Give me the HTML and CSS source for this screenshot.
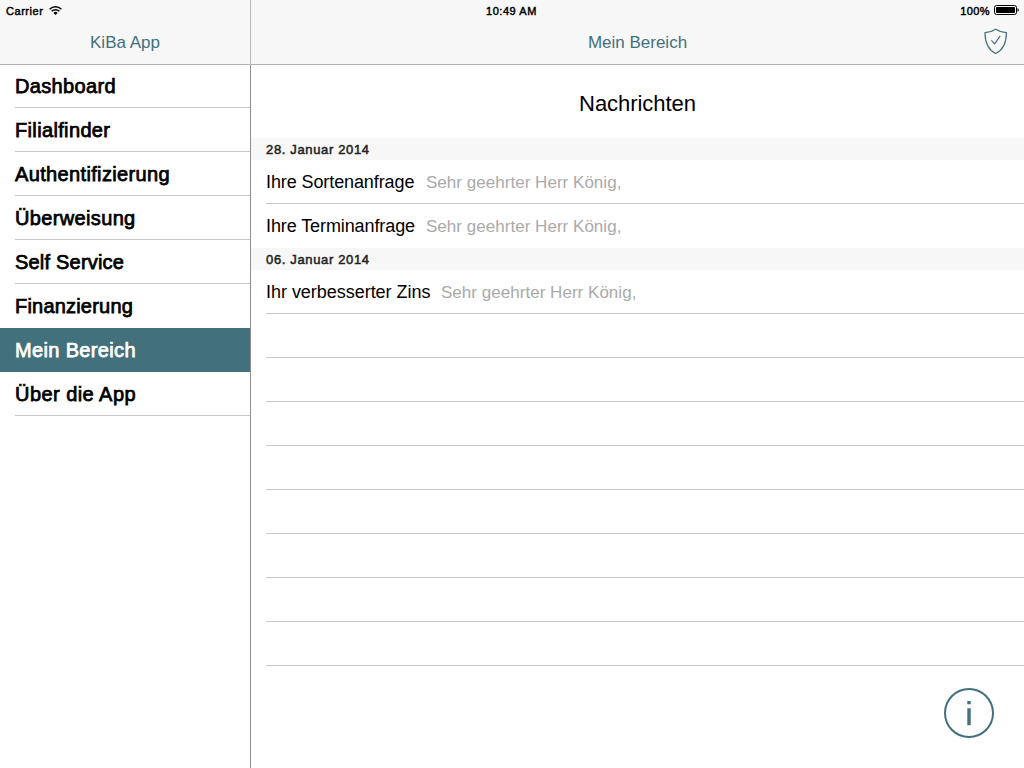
FILE: index.html
```html
<!DOCTYPE html>
<html lang="de">
<head>
<meta charset="utf-8">
<title>KiBa App</title>
<link rel="stylesheet" href="styles.css">
</head>
<body>
<div class="app">
  <aside class="sidebar">
    <header class="bar">
      <div class="status"><span>Carrier</span>
        <svg class="wifi" width="13" height="9" viewBox="0 0 13 9"><g fill="none" stroke="#000" stroke-width="1.5"><path d="M.6 3.200a8.600 8.600 0 0 1 11.800 0"/><path d="M2.600 5.300a5.600 5.600 0 0 1 7.800 0"/></g><path d="M6.500 9 4.400 6.900a3 3 0 0 1 4.200 0z"/></svg>
      </div>
      <div class="bar-title app-name">KiBa App</div>
    </header>
    <nav class="menu">
      <a class="item">Dashboard</a>
      <a class="item">Filialfinder</a>
      <a class="item">Authentifizierung</a>
      <a class="item">Überweisung</a>
      <a class="item snug">Self Service</a>
      <a class="item snug last">Finanzierung</a>
      <a class="item selected">Mein Bereich</a>
      <a class="item wide">Über die App</a>
    </nav>
  </aside>
  <main class="content">
    <header class="bar">
      <div class="status status-main"><span class="clock">10:49 AM</span><span class="charge">100%</span>
        <svg class="battery" width="25" height="10" viewBox="0 0 25 10"><rect x=".5" y=".5" width="22" height="9" rx="2" fill="none" stroke="#000"/><rect x="2" y="2" width="19" height="6" rx=".8"/><path d="M23.5 3.3q1.3.3 1.3 1.7t-1.3 1.7z"/></svg>
      </div>
      <div class="bar-title">Mein Bereich</div>
      <svg class="shield" width="24" height="27" viewBox="0 0 24 27" fill="none" stroke="#42707c" stroke-width="1.2"><path d="M11.700 1.300C8.500 3.500 5 4.500 1 4.700 1 12.500 2.300 20.800 11.700 25.500 21.100 20.800 22.400 12.500 22.400 4.700 18.400 4.500 14.900 3.500 11.700 1.300z"/><path d="m7.400 12.300 3.300 3.500 5.500-7.900"/></svg>
    </header>
    <h1 class="title">Nachrichten</h1>
    <h2 class="date">28. Januar 2014</h2>
    <div class="row"><span class="subject">Ihre Sortenanfrage</span><span class="preview">Sehr geehrter Herr König,</span></div>
    <div class="row last"><span class="subject">Ihre Terminanfrage</span><span class="preview">Sehr geehrter Herr König,</span></div>
    <h2 class="date">06. Januar 2014</h2>
    <div class="row"><span class="subject zins">Ihr verbesserter Zins</span><span class="preview">Sehr geehrter Herr König,</span></div>
    <div class="row"></div><div class="row"></div><div class="row"></div><div class="row"></div>
    <div class="row"></div><div class="row"></div><div class="row"></div><div class="row"></div>
    <svg class="info" width="50" height="50" viewBox="0 0 50 50"><circle cx="25" cy="25" r="24" fill="none" stroke="#42707c" stroke-width="2"/><path fill="#42707c" d="M23.300 13h3.400v3.300h-3.400zM23.300 20.300h3.400v17h-3.400z"/></svg>
  </main>
</div>
</body>
</html>
```
FILE: styles.css
```css
* { box-sizing: border-box; }
body { margin: 0; background: #fff; color: #000; font-family: "Liberation Sans", Arial, sans-serif; }
.app { display: flex; width: 1024px; height: 768px; overflow: hidden; }
.sidebar { width: 251px; flex: none; border-right: 1px solid #8e8e8f; }
.content { flex: 1; position: relative; }
.bar { position: relative; height: 65px; background: #f7f7f7; border-bottom: 1px solid #b2b2b2; }
.sidebar .bar { margin-right: -1px; border-right: 1px solid #b8b8b8; }
.status { display: flex; align-items: center; height: 22px; padding-left: 6px; font-size: 11px; letter-spacing: .55px; -webkit-text-stroke: .45px; }
.wifi { margin: -2px 0 0 6px; }
.status-main { padding: 0 5px 0 235px; }
.charge { margin-left: auto; letter-spacing: .4px; }
.battery { margin: -2px 0 0 4px; }
.bar-title { height: 42px; line-height: 41px; text-align: center; font-size: 17px; color: #42707c; }
.shield { position: absolute; right: 16px; top: 28px; }
.menu { display: flex; flex-direction: column; margin-top: -1px; }
.item { height: 44px; padding-left: 15px; line-height: 45px; font-size: 20px; letter-spacing: .35px; -webkit-text-stroke: .75px; background: linear-gradient(#c8c7cc, #c8c7cc) 15px 100% / 100% 1px no-repeat; }
.item.snug { letter-spacing: .2px; }
.item.wide { letter-spacing: .45px; }
.item.last { background: none; }
.item.selected { background: #42707c; color: #fff; }
.title { margin: 0; height: 73px; line-height: 77px; text-align: center; font-size: 22px; font-weight: 400; letter-spacing: -.05px; }
.date { margin: 0; height: 22px; padding-left: 15px; background: #f7f7f7; color: #222; font-size: 13px; line-height: 23px; font-weight: 400; letter-spacing: .65px; -webkit-text-stroke: .5px; }
.row { display: flex; height: 44px; margin-left: 15px; border-bottom: 1px solid #c8c7cc; line-height: 44px; white-space: nowrap; }
.row.last { border-bottom-color: transparent; }
.subject { width: 160px; font-size: 18px; letter-spacing: -.1px; }
.subject.zins { width: 175px; letter-spacing: -.03px; }
.preview { font-size: 17px; line-height: 45px; color: #aaa; letter-spacing: .03px; }
.info { position: absolute; right: 30px; bottom: 30px; }
```
